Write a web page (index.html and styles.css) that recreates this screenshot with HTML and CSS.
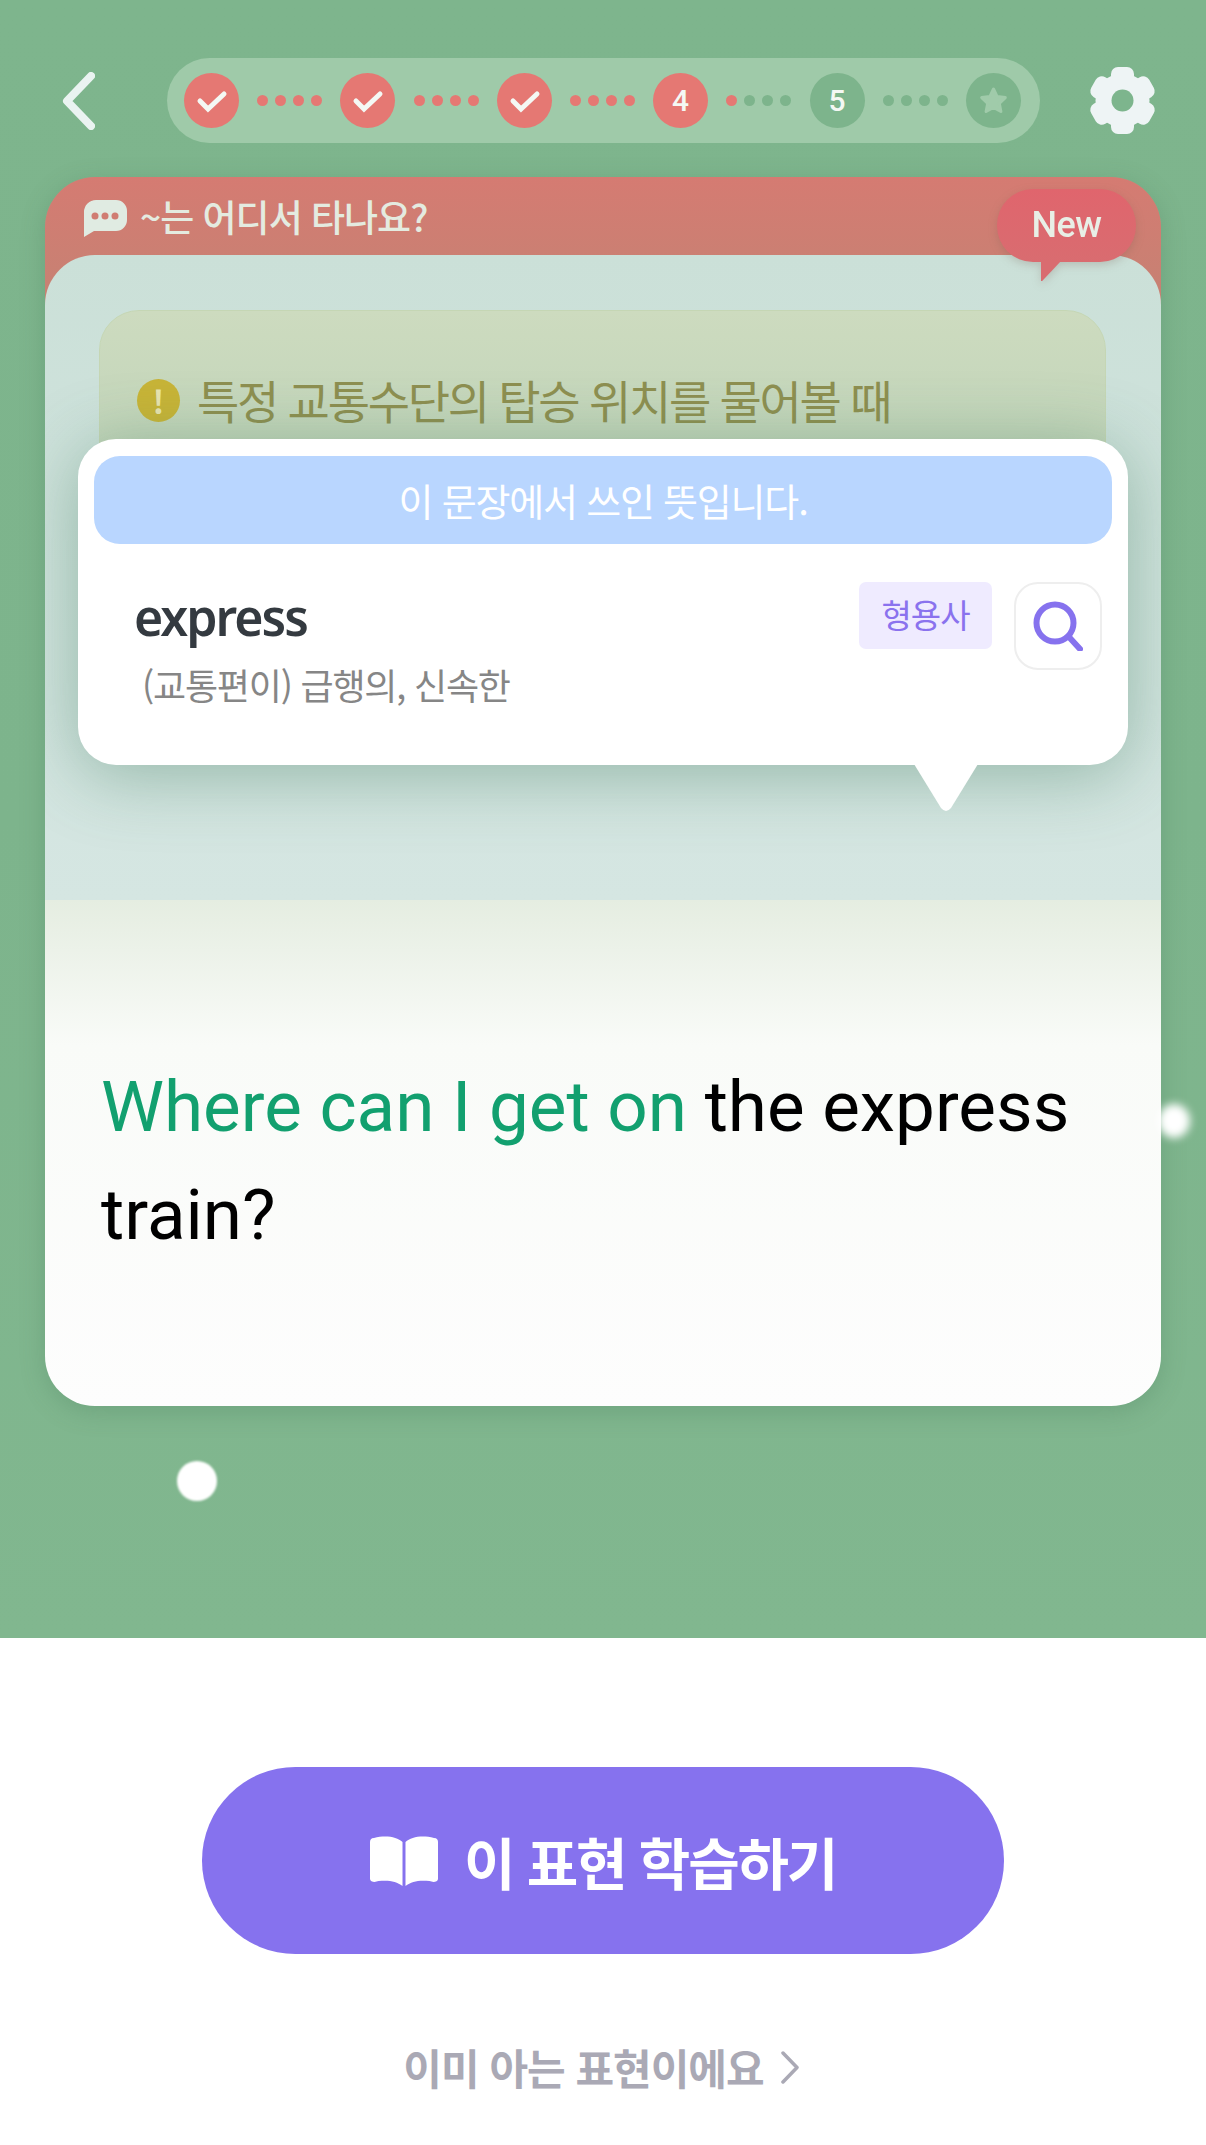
FILE: index.html
```html
<!DOCTYPE html>
<html lang="ko">

<head>
	<meta charset="UTF-8">
	<meta name="viewport" content="width=device-width, initial-scale=1.0">
	<title>이 표현 학습하기</title>
	<link rel="stylesheet" href="styles.css">
</head>

<body>
	<div class="screen">
		<!--상단 진행바-->
		<div class="top">
			<svg class="top__back" viewBox="0 0 33 58"><path d="M29 4 5 29l24 25" /></svg>
			<div class="steps">
				<div class="step step--on"><svg viewBox="0 0 55 55"><path d="M16 28l8 8 16-15" /></svg></div>
				<div class="dots"><i class="on"></i><i class="on"></i><i class="on"></i><i class="on"></i></div>
				<div class="step step--on"><svg viewBox="0 0 55 55"><path d="M16 28l8 8 16-15" /></svg></div>
				<div class="dots"><i class="on"></i><i class="on"></i><i class="on"></i><i class="on"></i></div>
				<div class="step step--on"><svg viewBox="0 0 55 55"><path d="M16 28l8 8 16-15" /></svg></div>
				<div class="dots"><i class="on"></i><i class="on"></i><i class="on"></i><i class="on"></i></div>
				<div class="step step--on">4</div>
				<div class="dots"><i class="on"></i><i></i><i></i><i></i></div>
				<div class="step">5</div>
				<div class="dots"><i></i><i></i><i></i><i></i></div>
				<div class="step"><svg class="step__star" viewBox="0 0 55 55"><path d="M27.5 16l3.6 7.6 8.2 1-6 5.7 1.6 8.2-7.4-4-7.4 4 1.6-8.2-6-5.7 8.2-1z" /></svg></div>
			</div>
			<svg class="top__gear" viewBox="0 0 65 67">
				<g fill="#eef4f5">
					<circle cx="32.500" cy="33.500" r="27" />
					<rect x="21" y="0" width="23" height="67" rx="7" />
					<rect x="21" y="0" width="23" height="67" rx="7" transform="rotate(60 32.500 33.500)" />
					<rect x="21" y="0" width="23" height="67" rx="7" transform="rotate(120 32.500 33.500)" />
				</g>
				<circle cx="32.500" cy="33.500" r="11" fill="#7db58d" />
			</svg>
		</div>

		<!--카드-->
		<div class="card">
			<div class="card__head">
				<svg class="card__icon" viewBox="0 0 43 38">
					<path d="M12 0h20a11 11 0 0 1 11 11v9a11 11 0 0 1-11 11H10L0 37V12A12 12 0 0 1 12 0z" fill="#e0ebe2" />
					<circle cx="11" cy="16" r="3.500" fill="#d07c72" /><circle cx="21" cy="16" r="3.500" fill="#d07c72" /><circle cx="31" cy="16" r="3.500" fill="#d07c72" />
				</svg>
				<span class="card__title">~는 어디서 타나요?</span>
				<div class="badge">New</div>
			</div>
			<div class="card__body">
				<div class="notice">
					<span class="notice__mark">!</span>
					<span>특정 교통수단의 탑승 위치를 물어볼 때</span>
				</div>
				<p class="sentence"><span class="sentence__hit">Where can I get on</span> <span>the express</span><br><span>train?</span></p>

				<!--단어 팝업-->
				<div class="pop">
					<div class="pop__banner">이 문장에서 쓰인 뜻입니다.</div>
					<div class="pop__row">
						<div class="pop__words">
							<div class="pop__word">express</div>
							<div class="pop__mean">(교통편이) 급행의, 신속한</div>
						</div>
						<span class="pop__tag">형용사</span>
						<div class="pop__search">
							<svg viewBox="0 0 50 50"><circle cx="22" cy="22" r="18.500" /><path d="M36 36l11 12" /></svg>
						</div>
					</div>
					<svg class="pop__tail" viewBox="0 0 64 48"><path d="M0 0h64L37 44q-5 6-10 0z" /></svg>
				</div>
			</div>
		</div>

		<div class="spark spark--right"></div>
		<div class="spark spark--left"></div>
	</div>

	<!--하단 버튼-->
	<div class="bottom">
		<button class="learn">
			<svg viewBox="0 0 68 50"><path d="M32.500 6v44c-6-5-14-6-24-5l-4 1c-2 0-4.500-1-4.500-3V6c0-2 1-4 4-4 12-3 23-1 28.500 4zM35.500 6v44c6-5 14-6 24-5l4 1c2 0 4.500-1 4.500-3V6c0-2-1-4-4-4-12-3-23-1-28.500 4z" /></svg>
			이 표현 학습하기
		</button>
		<a class="skip">이미 아는 표현이에요
			<svg viewBox="0 0 18 33"><path d="M2 2l14 14.500L2 31" /></svg>
		</a>
	</div>
</body>

</html>
```

FILE: styles.css
```css
* {
	margin: 0;
	padding: 0;
	box-sizing: border-box;
}

body {
	width: 1206px;
	height: 2145px;
	overflow: hidden;
	background: #fff;
	font-family: "Noto Sans CJK KR", sans-serif;
}

.screen {
	position: relative;
	height: 1638px;
	padding-top: 58px;
	background: linear-gradient(#7eb58d, #7db48c 50%, #81b78f);
}

/* top bar */
.top {
	display: flex;
	align-items: center;
	height: 85px;
	padding-left: 62px;
}

.top__back {
	width: 33px;
	height: 58px;
	margin-right: 72px;
	fill: none;
	stroke: #eaf3f1;
	stroke-width: 8;
	stroke-linecap: round;
	stroke-linejoin: round;
}

.top__gear {
	width: 65px;
	height: 67px;
	margin-left: 50px;
	overflow: visible;
}

.steps {
	display: flex;
	align-items: center;
	justify-content: space-between;
	width: 873px;
	height: 85px;
	padding: 0 19px 0 17px;
	border-radius: 43px;
	background: #9fcaa9;
}

.step {
	display: flex;
	align-items: center;
	justify-content: center;
	width: 55px;
	height: 55px;
	border-radius: 50%;
	background: #7db48c;
	color: #f4f8f4;
	font-family: "Roboto", sans-serif;
	font-size: 30px;
	font-weight: 500;
}

.step--on {
	background: #e57873;
}

.step svg {
	width: 55px;
	height: 55px;
	fill: none;
	stroke: #f4f8f4;
	stroke-width: 5;
	stroke-linecap: round;
}

.step .step__star {
	fill: #a0cbaa;
	stroke: #a0cbaa;
	stroke-width: 3;
	stroke-linejoin: round;
}

.dots {
	display: flex;
	gap: 7px;
}

.dots i {
	width: 11px;
	height: 11px;
	border-radius: 50%;
	background: #7db48c;
}

.dots i.on {
	background: #e57873;
}

/* card */
.card {
	width: 1116px;
	height: 1229px;
	margin: 34px 0 0 45px;
	display: flex;
	flex-direction: column;
	border-radius: 50px;
	background: linear-gradient(#d57b72, #c58273) no-repeat 0 0 / 100% 130px;
	box-shadow: 0 6px 24px rgba(60, 110, 80, .25);
}

.card__head {
	position: relative;
	display: flex;
	align-items: center;
	height: 78px;
	padding: 0 0 0 39px;
}

.card__icon {
	width: 43px;
	height: 38px;
	margin: 6px 13px 0 0;
}

.card__title {
	color: #e4ebe0;
	font-size: 37px;
	font-weight: 500;
	letter-spacing: -1px;
}

.badge {
	position: absolute;
	left: 952px;
	top: 12px;
	width: 139px;
	height: 73px;
	border-radius: 36px;
	background: linear-gradient(#e0656d, #d96c70);
	color: #e8efe6;
	font-family: "Roboto", sans-serif;
	font-size: 36px;
	font-weight: 500;
	line-height: 73px;
	text-align: center;
	letter-spacing: -.5px;
	filter: drop-shadow(0 3px 4px rgba(120, 90, 80, .25));
	z-index: 2;
}

.badge::after {
	content: "";
	position: absolute;
	left: 44px;
	top: 72px;
	width: 20px;
	height: 20px;
	background: #d96c70;
	clip-path: polygon(0 0, 100% 0, 6% 100%, 0 100%);
}

.card__body {
	position: relative;
	flex: 1;
	display: flex;
	flex-direction: column;
	padding: 55px 55px 137px 54px;
	overflow: hidden;
	border-radius: 50px;
	background: linear-gradient(#cbe0d8, #d5e6e2 645px, #e5ede1 645px, #f9fbf8 790px, #fdfdfd);
}

.notice {
	display: flex;
	align-items: flex-start;
	gap: 17px;
	height: 260px;
	padding: 61px 0 0 37px;
	border: 1px solid #c5d6b4;
	border-radius: 40px;
	background: linear-gradient(#cddbbf, #b9d0b6);
	color: #8e8f50;
	font-size: 46px;
	line-height: 54px;
	letter-spacing: -2.300px;
}

.notice__mark {
	flex: none;
	width: 43px;
	height: 43px;
	margin-top: 7px;
	border-radius: 50%;
	background: #c8b437;
	color: #e8e4b0;
	font-size: 32px;
	font-weight: 700;
	line-height: 43px;
	text-align: center;
	letter-spacing: 0;
}

.sentence {
	margin-top: auto;
	padding-left: 2px;
	color: #000;
	font-family: "Roboto", sans-serif;
	font-size: 71px;
	line-height: 108px;
}

.sentence__hit {
	color: #12a06f;
}

/* word popup */
.pop {
	position: absolute;
	left: 33px;
	top: 184px;
	width: 1050px;
	height: 326px;
	padding: 17px 16px 0;
	border-radius: 38px;
	background: #fff;
	box-shadow: 0 10px 70px rgba(60, 120, 90, .42);
}

.pop__banner {
	height: 88px;
	border-radius: 26px;
	background: #b9d6ff;
	color: #fff;
	font-size: 38px;
	line-height: 88px;
	text-align: center;
	letter-spacing: -1.200px;
}

.pop__row {
	display: flex;
	align-items: flex-start;
	padding: 38px 10px 0 40px;
}

.pop__words {
	flex: 1;
}

.pop__word {
	color: #343a40;
	font-family: "Noto Sans", sans-serif;
	font-size: 50px;
	font-weight: 600;
	line-height: 70px;
	letter-spacing: -2px;
}

.pop__mean {
	margin: 7px 0 0 8px;
	color: #868686;
	font-size: 36px;
	line-height: 50px;
	letter-spacing: -1.200px;
}

.pop__tag {
	width: 133px;
	height: 67px;
	border-radius: 7px;
	background: #efebff;
	color: #8a72ee;
	font-size: 33px;
	line-height: 64px;
	text-align: center;
	letter-spacing: -1px;
}

.pop__search {
	width: 88px;
	height: 88px;
	margin-left: 22px;
	padding: 17px;
	border: 2px solid #eeeeee;
	border-radius: 24px;
	background: #fff;
}

.pop__search svg {
	display: block;
	width: 50px;
	height: 50px;
	fill: none;
	stroke: #8672ee;
	stroke-width: 6;
	stroke-linecap: round;
}

.pop__tail {
	position: absolute;
	left: 836px;
	top: 325px;
	width: 64px;
	height: 48px;
	fill: #fff;
}

.spark {
	position: absolute;
	border-radius: 50%;
	background: #fff;
}

.spark--right {
	left: 1158px;
	top: 1104px;
	width: 32px;
	height: 34px;
	filter: blur(4px);
}

.spark--left {
	left: 177px;
	top: 1461px;
	width: 40px;
	height: 40px;
	filter: blur(1px);
}

/* bottom */
.bottom {
	display: flex;
	flex-direction: column;
	align-items: center;
	padding-top: 129px;
}

.learn {
	display: flex;
	align-items: center;
	justify-content: center;
	gap: 26px;
	width: 802px;
	height: 187px;
	border: 0;
	border-radius: 94px;
	background: #8672ee;
	color: #fff;
	font-family: "Noto Sans CJK KR", sans-serif;
	font-size: 56px;
	font-weight: 700;
	letter-spacing: -2.200px;
}

.learn svg {
	width: 68px;
	height: 50px;
	fill: #fff;
}

.skip {
	display: flex;
	align-items: center;
	gap: 17px;
	margin-top: 83px;
	padding-right: 4px;
	color: #aaa9b5;
	font-size: 42px;
	font-weight: 700;
	line-height: 60px;
	letter-spacing: -1px;
}

.skip svg {
	width: 18px;
	height: 33px;
	fill: none;
	stroke: #aaa9b5;
	stroke-width: 3.500;
	stroke-linecap: round;
	stroke-linejoin: round;
}
```
